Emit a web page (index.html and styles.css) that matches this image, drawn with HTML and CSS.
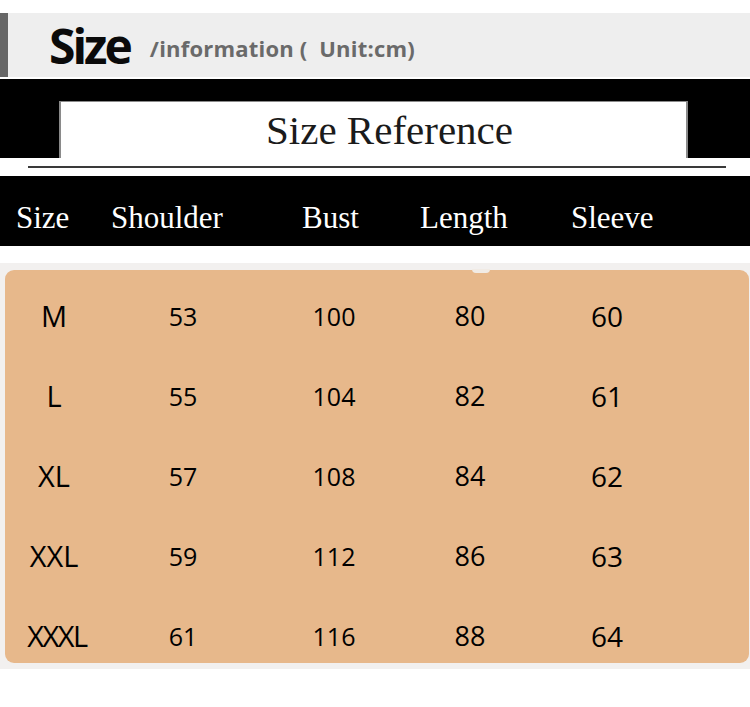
FILE: index.html
```html
<!DOCTYPE html>
<html lang="en">
<head>
<meta charset="utf-8">
<title>Size information</title>
<link rel="stylesheet" href="styles.css">
</head>
<body>
<div class="page">
  <header class="topbar">
    <span class="big">Size</span>
    <span class="sub">/information (&nbsp; Unit:cm)</span>
  </header>

  <section class="banner">
    <div class="banner-box">Size Reference</div>
  </section>

  <div class="rule-wrap"><div class="rule"></div></div>

  <div class="thead">
    <span>Size</span>
    <span>Shoulder</span>
    <span>Bust</span>
    <span>Length</span>
    <span>Sleeve</span>
  </div>

  <div class="table-area">
    <div class="table">
      <div class="row"><span class="c1">M</span><span class="c2">53</span><span class="c3">100</span><span class="c4">80</span><span class="c5">60</span></div>
      <div class="row"><span class="c1">L</span><span class="c2">55</span><span class="c3">104</span><span class="c4">82</span><span class="c5">61</span></div>
      <div class="row"><span class="c1">XL</span><span class="c2">57</span><span class="c3">108</span><span class="c4">84</span><span class="c5">62</span></div>
      <div class="row"><span class="c1">XXL</span><span class="c2">59</span><span class="c3">112</span><span class="c4">86</span><span class="c5">63</span></div>
      <div class="row"><span class="c1 narrow">XXXL</span><span class="c2">61</span><span class="c3">116</span><span class="c4">88</span><span class="c5">64</span></div>
    </div>
  </div>
</div>
</body>
</html>
```

FILE: styles.css
```css
* { box-sizing: border-box; }

html, body {
  margin: 0;
  padding: 0;
  background: #ffffff;
}

.page {
  width: 750px;
  height: 707px;
  overflow: hidden;
  padding-top: 13px;
}

/* ---------- top bar ---------- */
.topbar {
  display: flex;
  align-items: flex-start;
  height: 64px;
  background: #eeeeee;
  border-left: 8px solid #666666;
  font-family: "Open Sans", "Noto Sans", sans-serif;
}

.big {
  margin-left: 41px;
  margin-top: 9px;
  font-size: 48px;
  line-height: 48px;
  font-weight: 700;
  letter-spacing: -3px;
  color: #0a0a0a;
}

.sub {
  margin-left: 20px;
  margin-top: 24px;
  font-size: 22px;
  line-height: 22px;
  font-weight: 700;
  letter-spacing: 0.2px;
  color: #6a6a6a;
  white-space: pre;
}

/* ---------- black banner ---------- */
.banner {
  margin-top: 2px;
  height: 79px;
  background: #000000;
  padding-top: 22px;
  padding-left: 59px;
}

.banner-box {
  width: 629px;
  height: 57px;
  background: #ffffff;
  border-top: 1px solid #8a8a8a;
  border-left: 2px solid #8a8a8a;
  border-right: 2px solid #8a8a8a;
  display: flex;
  align-items: center;
  justify-content: center;
  padding-left: 32px;
  font-family: "Liberation Serif", "Times New Roman", serif;
  font-size: 41px;
  line-height: 1;
  color: #1b1b1b;
}

/* ---------- thin rule ---------- */
.rule-wrap {
  height: 18px;
  padding-top: 8px;
  background: #ffffff;
}

.rule {
  height: 2px;
  margin-left: 28px;
  width: 698px;
  background: #3a3a3a;
}

/* ---------- header row ---------- */
.thead {
  height: 70px;
  background: #000000;
  padding-top: 14px;
  padding-left: 16px;
  display: grid;
  grid-template-columns: 95px 191px 118px 151px auto;
  font-family: "Liberation Serif", "Times New Roman", serif;
  font-size: 31px;
  line-height: 56px;
  color: #ffffff;
}

/* ---------- table ---------- */
.table-area {
  margin-top: 17px;
  background: #f2f0ef;
  padding: 7px 1px 6px 5px;
}

.table {
  position: relative;
  background: #e7b88b;
  border-radius: 9px;
  padding: 30px 0 11px 0;
  display: flex;
  flex-direction: column;
  gap: 48px;
  font-family: "Open Sans", "Noto Sans", sans-serif;
  color: #000000;
}

.table::after {
  content: "";
  position: absolute;
  left: 467px;
  top: -1px;
  width: 18px;
  height: 4px;
  border-radius: 0 0 8px 8px;
  background: #f1ebe5;
}

.row {
  display: grid;
  grid-template-columns: 98px 160px 142px 130px 144px;
  height: 32px;
  line-height: 32px;
  text-align: center;
}

.c1 { font-size: 29px; }
.c2 { font-size: 25px; }
.c3 { font-size: 25px; }
.c4 { font-size: 27px; }
.c5 { font-size: 28px; }

.narrow {
  letter-spacing: -1.5px;
  padding-left: 6px;
}
```
